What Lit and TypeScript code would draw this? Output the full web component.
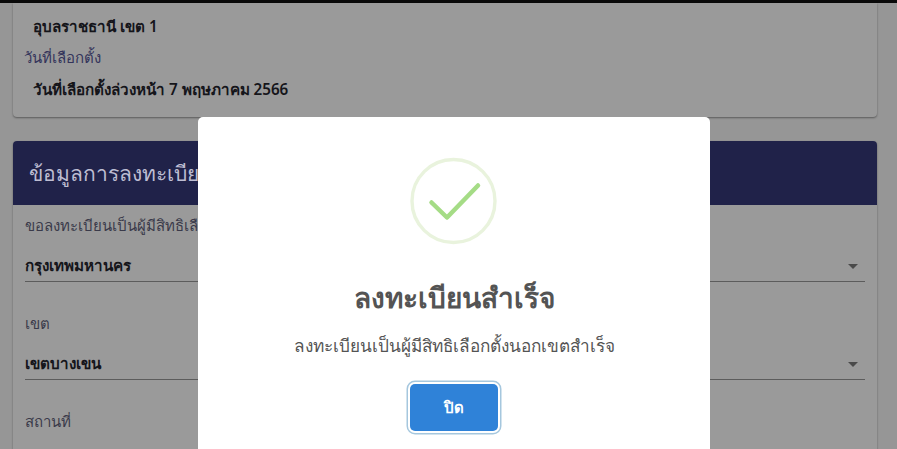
import { LitElement, html, css } from "lit";
import { customElement } from "lit/decorators.js";

@customElement("app-root")
export class AppRoot extends LitElement {
  static styles = css`
    :host { display: block; width: 897px; height: 449px; overflow: hidden; position: relative; background: #969696; font-family: "Noto Sans", "Open Sans", sans-serif; color: #2b2b33; }
    .topbar { height: 3px; background: #0a0a0a; }
    .page { display: flex; flex-direction: column; gap: 24px; padding: 0 20px 0 13px; }
    .card { background: #9a9a9a; border-radius: 0 0 4px 4px; box-shadow: 0 1px 2px rgba(0,0,0,.4); }
    .info { height: 114px; padding: 0 12px; display: flex; flex-direction: column; box-sizing: border-box; }
    .info .label { font-size: 15px; line-height: 22px; color: #34345a; margin-left: -1px; }
    .info .value { font-size: 15.2px; font-weight: 600; line-height: 22px; color: #15151a; padding-left: 8px; }
    .v1 { margin-top: 12px; }
    .l2 { margin-top: 9px; }
    .v2 { margin-top: 10px; }
    .form { border-radius: 4px; }
    .head { height: 64px; background: #202249; border-radius: 4px 4px 0 0; color: #bdbdd2; font-size: 21px; line-height: 64px; padding-left: 16px; }
    .fields { padding: 0 12px 60px; display: flex; flex-direction: column; }
    .flabel { font-size: 15px; line-height: 22px; color: #3a3a4a; }
    .select { display: flex; justify-content: space-between; align-items: center; height: 30px; padding-top: 8px; border-bottom: 1px solid #5c5c5c; font-size: 15.2px; font-weight: 600; color: #15151a; margin-top: 7px; margin-bottom: 30px; }
    .arrow { width: 0; height: 0; border-left: 5px solid transparent; border-right: 5px solid transparent; border-top: 5px solid #4a4a4a; margin-right: 7px; }
    .f1 { margin-top: 9px; }
    .modal { position: absolute; left: 198px; top: 117px; width: 512px; height: 340px; background: #fff; border-radius: 5px; display: flex; flex-direction: column; align-items: center; box-sizing: border-box; padding-top: 40px; }
    .modal svg { display: block; width: 88px; height: 88px; }
    .modal h2 { margin: 30px 0 0; font-size: 28px; font-weight: 600; line-height: 44px; color: #545454; }
    .modal p { margin: 14px 0 0; font-size: 17.2px; line-height: 26px; color: #545454; }
    .btn { margin-top: 25px; width: 88px; height: 47px; box-sizing: border-box; border: 0; border-radius: 5px; background: #2f82d8; color: #fff; font: 600 15px "Noto Sans", sans-serif; box-shadow: 0 0 0 2px #fff, 0 0 0 3.5px #a5c7de; }
  `;
  render() {
    return html`
      <div class="topbar"></div>
      <div class="page">
        <section class="card info">
          <div class="value v1">อุบลราชธานี เขต 1</div>
          <div class="label l2">วันที่เลือกตั้ง</div>
          <div class="value v2">วันที่เลือกตั้งล่วงหน้า 7 พฤษภาคม 2566</div>
        </section>
        <section class="card form">
          <div class="head">ข้อมูลการลงทะเบียน</div>
          <div class="fields">
            <div class="flabel f1">ขอลงทะเบียนเป็นผู้มีสิทธิเลือกตั้งนอกเขต</div>
            <div class="select"><span>กรุงเทพมหานคร</span><i class="arrow"></i></div>
            <div class="flabel">เขต</div>
            <div class="select"><span>เขตบางเขน</span><i class="arrow"></i></div>
            <div class="flabel">สถานที่</div>
          </div>
        </section>
      </div>
      <div class="modal" role="dialog">
        <svg viewBox="0 0 88 88" fill="none">
          <circle cx="43.5" cy="44" r="41.5" stroke="#e9f3dd" stroke-width="3.4"></circle>
          <path d="M21.5 45.5 L37 60.5 L68 28.5" stroke="#a5dc86" stroke-width="4.5" stroke-linecap="round" stroke-linejoin="round"></path>
        </svg>
        <h2>ลงทะเบียนสำเร็จ</h2>
        <p>ลงทะเบียนเป็นผู้มีสิทธิเลือกตั้งนอกเขตสำเร็จ</p>
        <button class="btn">ปิด</button>
      </div>
    `;
  }
}
